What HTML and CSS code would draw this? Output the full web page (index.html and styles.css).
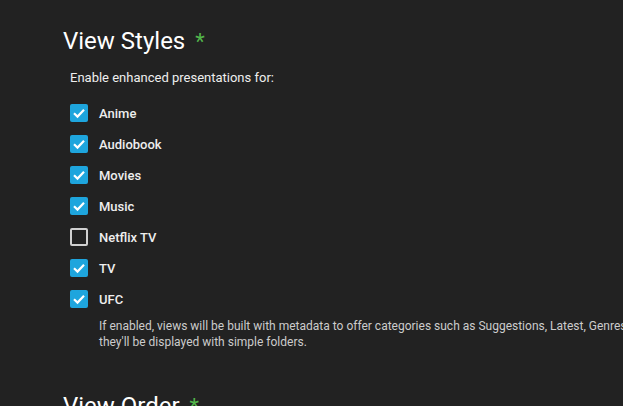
FILE: index.html
```html
<!DOCTYPE html>
<html>
<head>
<meta charset="utf-8">
<link rel="stylesheet" href="styles.css">
</head>
<body>
<div class="page">
  <section class="section">
    <h2 class="heading">View Styles <span class="star">*</span></h2>
    <div class="group">
      <div class="intro">Enable enhanced presentations for:</div>
      <div class="list">
        <label class="row"><span class="box checked"><svg viewBox="0 0 18 18"><path d="M4 9.3 L7.5 12.6 L14 5.8" /></svg></span><span class="label">Anime</span></label>
        <label class="row"><span class="box checked"><svg viewBox="0 0 18 18"><path d="M4 9.3 L7.5 12.6 L14 5.8" /></svg></span><span class="label">Audiobook</span></label>
        <label class="row"><span class="box checked"><svg viewBox="0 0 18 18"><path d="M4 9.3 L7.5 12.6 L14 5.8" /></svg></span><span class="label">Movies</span></label>
        <label class="row"><span class="box checked"><svg viewBox="0 0 18 18"><path d="M4 9.3 L7.5 12.6 L14 5.8" /></svg></span><span class="label">Music</span></label>
        <label class="row"><span class="box"></span><span class="label">Netflix TV</span></label>
        <label class="row"><span class="box checked"><svg viewBox="0 0 18 18"><path d="M4 9.3 L7.5 12.6 L14 5.8" /></svg></span><span class="label">TV</span></label>
        <label class="row"><span class="box checked"><svg viewBox="0 0 18 18"><path d="M4 9.3 L7.5 12.6 L14 5.8" /></svg></span><span class="label">UFC</span></label>
      </div>
      <div class="desc">If enabled, views will be built with metadata to offer categories such as Suggestions, Latest, Genres, and more. If disabled, they'll be displayed with simple folders.</div>
    </div>
  </section>
  <section class="section">
    <h2 class="heading">View Order <span class="star">*</span></h2>
  </section>
</div>
</body>
</html>
```

FILE: styles.css
```css
html, body {
  margin: 0;
  padding: 0;
  background: #222222;
  overflow: hidden;
}
body {
  font-family: Roboto, "Noto Sans", sans-serif;
  color: #eeeeee;
  width: 623px;
  height: 406px;
}
.page {
  padding: 23px 0 0 63px;
  width: 900px;
}
.section {
  margin-bottom: 38px;
}
.heading {
  margin: 0;
  font-size: 24px;
  font-weight: 400;
  line-height: 36px;
  color: #ffffff;
}
.star {
  color: #52b54b;
  font-size: 22px;
  margin-left: 4px;
}
.group {
  padding-left: 7px;
}
.intro {
  font-size: 13px;
  line-height: 16px;
  margin-top: 10px;
  margin-bottom: 18px;
}
.list {
  display: flex;
  flex-direction: column;
  gap: 13px;
}
.row {
  display: flex;
  align-items: center;
  height: 18px;
}
.box {
  width: 18px;
  height: 18px;
  box-sizing: border-box;
  border: 2px solid #d0d0d0;
  border-radius: 2px;
  margin-right: 11px;
  display: flex;
}
.box.checked {
  background: #1ea5dd;
  border-color: #1ea5dd;
  border-width: 0;
}
.box svg {
  width: 18px;
  height: 18px;
}
.box svg path {
  fill: none;
  stroke: #ffffff;
  stroke-width: 2.2;
}
.label {
  font-size: 13px;
  font-weight: 500;
}
.desc {
  margin-top: 10px;
  padding-left: 29px;
  font-size: 12px;
  line-height: 16px;
  color: #cccccc;
  width: 665px;
}
```
